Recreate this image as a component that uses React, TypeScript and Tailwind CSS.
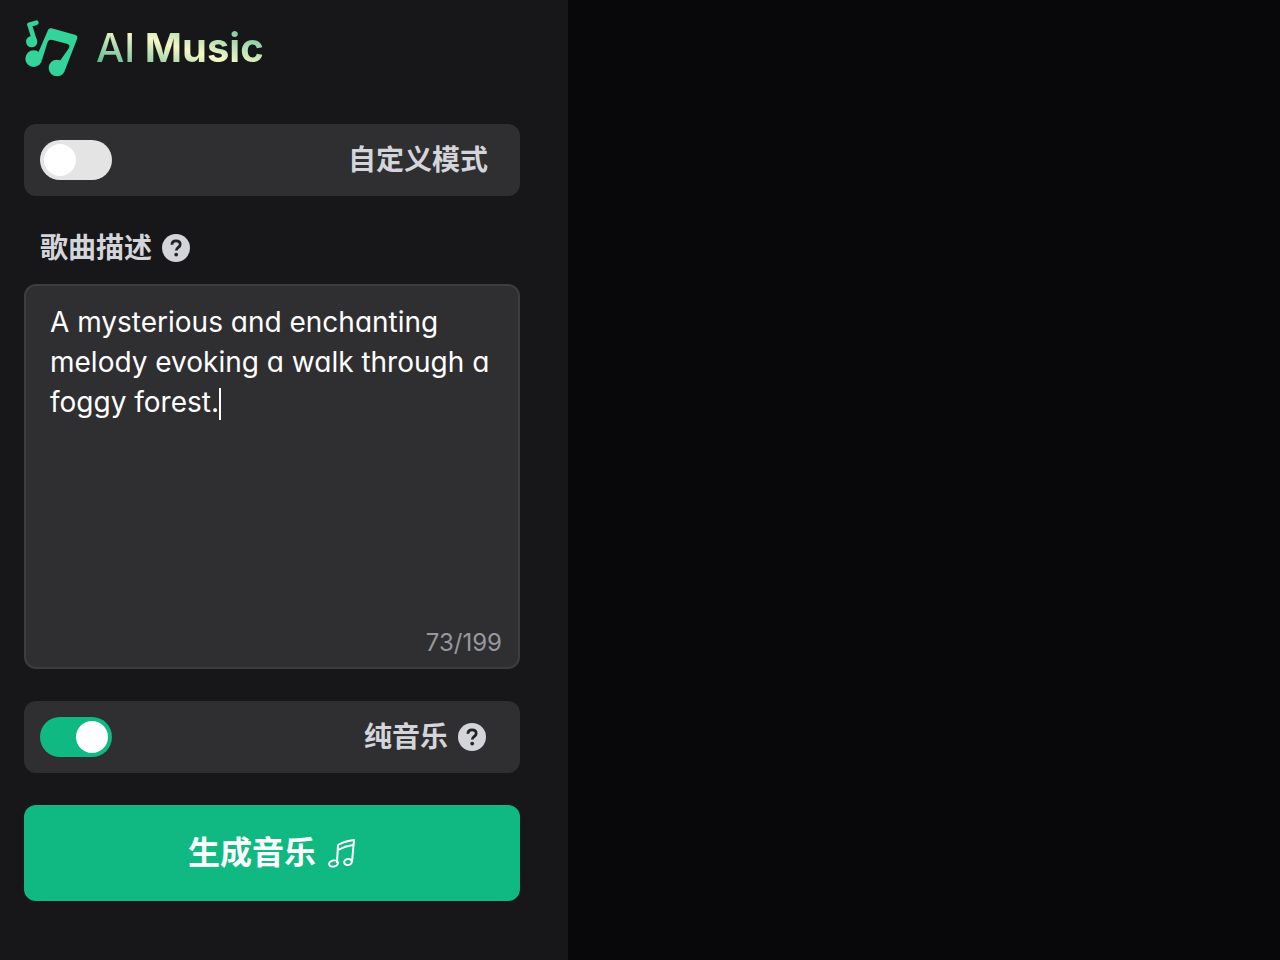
import { useState } from 'react'
import { clsx } from 'clsx'

const MAX_LENGTH = 199

interface ToggleProps {
  id: string
  checked: boolean
  onChange: (checked: boolean) => void
}

function Toggle({ id, checked, onChange }: ToggleProps) {
  return (
    <span
      className={clsx(
        'relative flex h-10 w-18 shrink-0 items-center rounded-full p-1 transition-colors',
        checked ? 'justify-end bg-[#10b981]' : 'justify-start bg-[#e4e4e5]'
      )}
    >
      <input
        id={id}
        type="checkbox"
        role="switch"
        checked={checked}
        onChange={(e) => onChange(e.target.checked)}
        className="absolute inset-0 cursor-pointer appearance-none rounded-full"
      />
      <span className="pointer-events-none size-8 rounded-full bg-white" />
    </span>
  )
}

function HelpButton({ label }: { label: string }) {
  return (
    <button type="button" aria-label={label} className="text-[#d4d5da]">
      <svg viewBox="0 0 28 28" className="size-7" aria-hidden="true">
        <circle cx="14" cy="14" r="14" fill="currentColor" />
        <path
          d="M9.9 10.8 C10 8 11.8 6.9 14 6.9 C16.5 6.9 18.2 8.4 18.2 10.5 C18.2 13.4 14.3 13.5 14.3 16.6"
          fill="none"
          stroke="#232325"
          strokeWidth="2.8"
        />
        <circle cx="14.2" cy="20.6" r="1.9" fill="#232325" />
      </svg>
    </button>
  )
}

function Logo() {
  return (
    <svg viewBox="42 24 162 180" className="h-15 w-[54px] text-[#34d399]" fill="currentColor" aria-hidden="true">
      <circle cx="65" cy="95" r="17" />
      <path
        d="M58 44 L79 38 M59 45 L73 90"
        fill="none"
        stroke="currentColor"
        strokeWidth="14"
        strokeLinecap="round"
        strokeLinejoin="round"
      />
      <circle cx="71" cy="146" r="25" />
      <circle cx="141" cy="174" r="25" />
      <path d="M84 130 L114 60 Q117 53 125 55 L197 75 Q204 78 202 85 L166 178 L146 158 L177 114 Q181 105 173 102 L128 90 Q117 87 113 96 L96 150 Z" />
    </svg>
  )
}

function NoteIcon() {
  return (
    <svg
      viewBox="0 0 28 30"
      className="h-[30px] w-7"
      fill="none"
      stroke="currentColor"
      strokeWidth="2"
      strokeLinejoin="round"
      aria-hidden="true"
    >
      <path d="M9 25 L10 7 Q17 3 26 2 L24 24" />
      <path d="M10 12 Q17 8 25 7" />
      <ellipse cx="5.5" cy="25.5" rx="4.5" ry="3" transform="rotate(-12 5.5 25.5)" />
      <ellipse cx="20" cy="24" rx="3.8" ry="3" transform="rotate(-12 20 24)" />
    </svg>
  )
}

export default function App() {
  const [customMode, setCustomMode] = useState(false)
  const [instrumental, setInstrumental] = useState(true)
  const [description, setDescription] = useState(
    'A mysterious and enchanting melody evoking a walk through a foggy forest.'
  )

  return (
    <div className="flex min-h-screen bg-[#08080a] font-['Inter','Noto_Sans_CJK_SC',sans-serif] text-[#d4d5da]">
      <aside className="w-full max-w-[568px] bg-[#171719] pt-4 pr-12 pb-8 pl-6">
        <header className="flex h-16 items-center gap-[18px]">
          <Logo />
          <h1 className="bg-linear-to-tr/srgb from-[#34a883] via-[#f6f7c6] to-[#4bb893] bg-clip-text text-[40px] leading-12 font-bold text-transparent">
            <span className="font-medium">AI</span> Music
          </h1>
        </header>

        <form onSubmit={(e) => e.preventDefault()}>
          <div className="mt-11 flex h-18 items-center justify-between rounded-xl bg-[#2f2f31] pr-8 pl-4">
            <Toggle id="custom-mode" checked={customMode} onChange={setCustomMode} />
            <label htmlFor="custom-mode" className="text-[28px] leading-10 font-semibold">
              自定义模式
            </label>
          </div>

          <div className="mt-8 flex items-center gap-2.5 pl-4">
            <label htmlFor="description" className="text-[28px] leading-10 font-semibold">
              歌曲描述
            </label>
            <HelpButton label="歌曲描述" />
          </div>

          <div className="relative mt-4 h-[385px] text-[28px] leading-10 text-white [font-feature-settings:'cv11']">
            <textarea
              id="description"
              value={description}
              maxLength={MAX_LENGTH}
              onChange={(e) => setDescription(e.target.value)}
              className="block h-full w-full resize-none rounded-xl border-2 border-[#3d3d40] bg-[#2f2f31] px-6 py-4 caret-transparent outline-none"
            />
            {/* mirrors the text so the caret sits after the last character */}
            <div
              aria-hidden="true"
              className="pointer-events-none absolute inset-0 border-2 border-transparent px-6 py-4 break-words whitespace-pre-wrap"
            >
              <span className="invisible">{description}</span>
              <span className="inline-block h-8 w-0.5 bg-white align-middle" />
            </div>
            <span className="absolute right-[18px] bottom-2 text-2xl leading-9 text-[#97989d]">
              {description.length}/{MAX_LENGTH}
            </span>
          </div>

          <div className="mt-8 flex h-18 items-center justify-between rounded-xl bg-[#2f2f31] pr-[34px] pl-4">
            <Toggle id="instrumental" checked={instrumental} onChange={setInstrumental} />
            <div className="flex items-center gap-2.5">
              <label htmlFor="instrumental" className="text-[28px] leading-10 font-semibold">
                纯音乐
              </label>
              <HelpButton label="纯音乐" />
            </div>
          </div>

          <button
            type="submit"
            className="mt-8 flex h-24 w-full items-center justify-center gap-3 rounded-xl bg-[#10b981] text-[32px] leading-12 font-semibold text-white"
          >
            生成音乐
            <NoteIcon />
          </button>
        </form>
      </aside>
      <main className="flex-1" />
    </div>
  )
}
